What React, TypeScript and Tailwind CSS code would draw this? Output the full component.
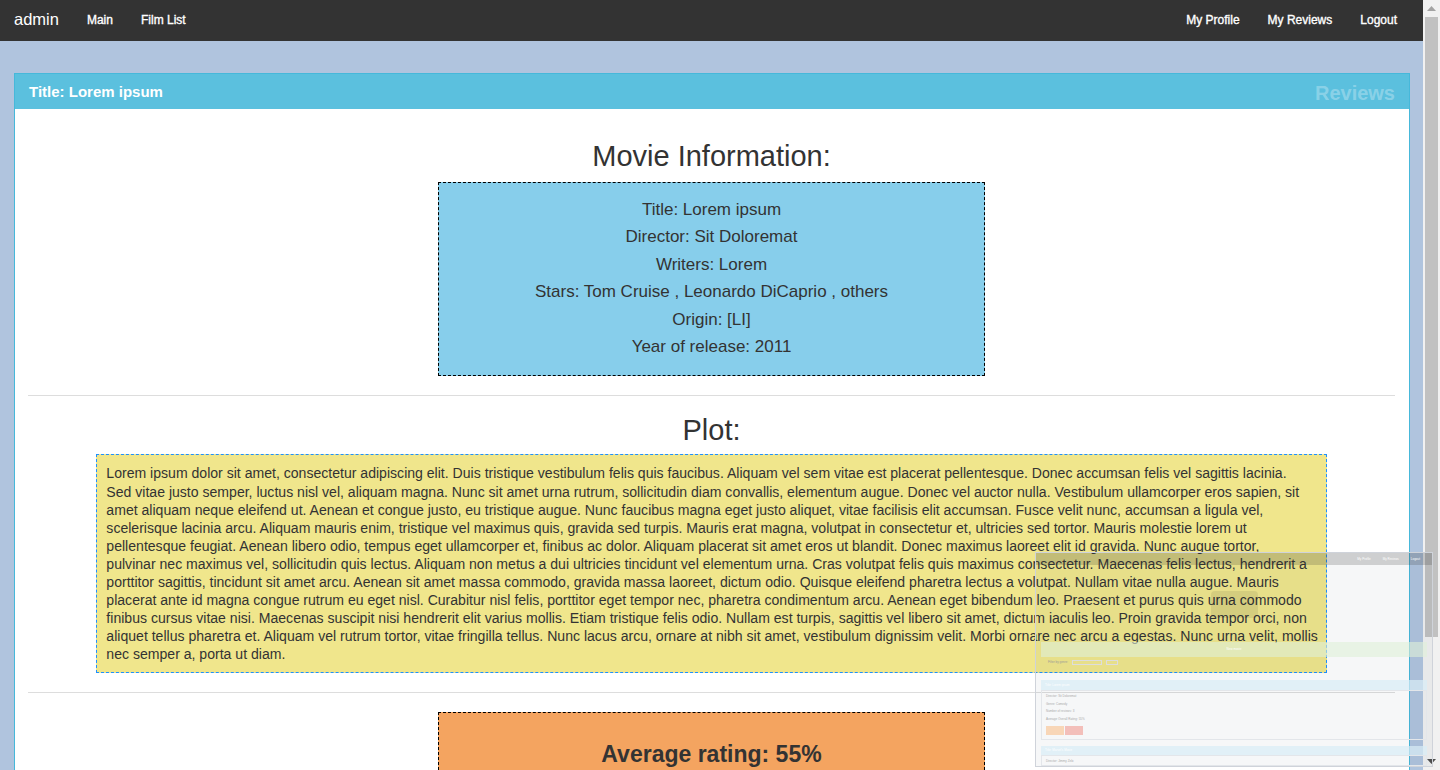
import React from 'react';

// lines as they wrap in the original page
const plotLines = [
  'Lorem ipsum dolor sit amet, consectetur adipiscing elit. Duis tristique vestibulum felis quis faucibus. Aliquam vel sem vitae est placerat pellentesque. Donec accumsan felis vel sagittis lacinia.',
  'Sed vitae justo semper, luctus nisl vel, aliquam magna. Nunc sit amet urna rutrum, sollicitudin diam convallis, elementum augue. Donec vel auctor nulla. Vestibulum ullamcorper eros sapien, sit',
  'amet aliquam neque eleifend ut. Aenean et congue justo, eu tristique augue. Nunc faucibus magna eget justo aliquet, vitae facilisis elit accumsan. Fusce velit nunc, accumsan a ligula vel,',
  'scelerisque lacinia arcu. Aliquam mauris enim, tristique vel maximus quis, gravida sed turpis. Mauris erat magna, volutpat in consectetur et, ultricies sed tortor. Mauris molestie lorem ut',
  'pellentesque feugiat. Aenean libero odio, tempus eget ullamcorper et, finibus ac dolor. Aliquam placerat sit amet eros ut blandit. Donec maximus laoreet elit id gravida. Nunc augue tortor,',
  'pulvinar nec maximus vel, sollicitudin quis lectus. Aliquam non metus a dui ultricies tincidunt vel elementum urna. Cras volutpat felis quis maximus consectetur. Maecenas felis lectus, hendrerit a',
  'porttitor sagittis, tincidunt sit amet arcu. Aenean sit amet massa commodo, gravida massa laoreet, dictum odio. Quisque eleifend pharetra lectus a volutpat. Nullam vitae nulla augue. Mauris',
  'placerat ante id magna congue rutrum eu eget nisl. Curabitur nisl felis, porttitor eget tempor nec, pharetra condimentum arcu. Aenean eget bibendum leo. Praesent et purus quis urna commodo',
  'finibus cursus vitae nisi. Maecenas suscipit nisi hendrerit elit varius mollis. Etiam tristique felis odio. Nullam est turpis, sagittis vel libero sit amet, dictum iaculis leo. Proin gravida tempor orci, non',
  'aliquet tellus pharetra et. Aliquam vel rutrum tortor, vitae fringilla tellus. Nunc lacus arcu, ornare at nibh sit amet, vestibulum dignissim velit. Morbi ornare nec arcu a egestas. Nunc urna velit, mollis',
  'nec semper a, porta ut diam.',
];

const movieInfo = [
  'Title: Lorem ipsum',
  'Director: Sit Doloremat',
  'Writers: Lorem',
  'Stars: Tom Cruise , Leonardo DiCaprio , others',
  'Origin: [LI]',
  'Year of release: 2011',
];

const Navbar: React.FC = () => (
  <nav className="h-[41px] shrink-0 bg-[#333] flex items-center justify-between pb-[2px] text-white [-webkit-text-stroke:0.35px_white]">
    <div className="flex items-center gap-7 pl-[14px]">
      <span className="text-[16.5px] [-webkit-text-stroke:0px]">admin</span>
      <span className="text-[12px]">Main</span>
      <span className="text-[12px]">Film List</span>
    </div>
    <div className="flex items-center gap-7 pr-[26px] text-[12px]">
      <span>My Profile</span>
      <span>My Reviews</span>
      <span>Logout</span>
    </div>
  </nav>
);

// faint screenshot preview that sits over the bottom right corner
const ShotPreview: React.FC = () => (
  <div className="absolute left-[1035px] top-[552px] w-[398px] h-[215px] border border-[#cfd3da] bg-[#1a2a50]/[0.04] flex flex-col overflow-hidden">
    <div className="h-[12px] bg-[#333]/20 flex items-center justify-end gap-3 pr-3 text-[3px] text-white">
      <span>My Profile</span>
      <span>My Reviews</span>
      <span>Logout</span>
    </div>
    <div className="h-[77px] flex justify-center pt-[26px]">
      <div className="w-[47px] h-[27px] bg-[#000]/[0.08] rounded-sm" />
    </div>
    <div className="mx-[5px] h-[15px] bg-[#dff0d8]/60 flex items-center justify-center text-[3px] text-white">New movie</div>
    <div className="h-[10px] flex items-center gap-1 pl-[12px] text-[3px] text-[#999]">
      <span>Filter by genre:</span>
      <div className="w-[30px] h-[5px] border border-[#ddd]" />
      <div className="w-[12px] h-[5px] border border-[#ddd]" />
    </div>
    <div className="h-[13px]" />
    <div className="mx-[5px] h-[10px] bg-[#d9edf7]/70 flex items-center px-[4px] text-[3px] text-white">Title: Lorem ipsum</div>
    <div className="mx-[5px] h-[50px] border border-[#e3e6ea] flex flex-col pl-[4px] pt-[3px] gap-[3px] text-[3px] text-[#aaa]">
      <span>Director: Sit Doloremat</span>
      <span>Genre: Comedy</span>
      <span>Number of reviews: 3</span>
      <span>Average Overall Rating: 55%</span>
      <div className="flex gap-[1px] mt-[2px]">
        <div className="w-[18px] h-[9px] bg-[#f9c89b]/70" />
        <div className="w-[18px] h-[9px] bg-[#f2a6a0]/70" />
      </div>
    </div>
    <div className="h-[6px]" />
    <div className="mx-[5px] h-[9px] bg-[#d9edf7]/70 flex items-center px-[4px] text-[3px] text-white">Title: Marvel's Movie</div>
    <div className="mx-[5px] flex-1 border border-[#e3e6ea] pl-[4px] pt-[3px] text-[3px] text-[#aaa]">Director: Jimmy Zelo</div>
  </div>
);

const Scrollbar: React.FC = () => (
  <div className="w-[17px] shrink-0 h-full bg-[#f1f1f1] flex flex-col">
    <div className="h-[17px] flex items-center justify-center">
      <svg width="9" height="5" viewBox="0 0 9 5"><polygon points="0,5 4.5,0 9,5" fill="#a3a3a3" /></svg>
    </div>
    <div className="flex-1 px-[2px]">
      <div className="h-[620px] bg-[#c1c1c1]" />
    </div>
    <div className="h-[17px] flex items-center justify-center">
      <svg width="9" height="5" viewBox="0 0 9 5"><polygon points="0,0 4.5,5 9,0" fill="#505050" /></svg>
    </div>
  </div>
);

export default function App() {
  return (
    <div className="relative flex h-[770px] w-full overflow-hidden bg-[#b0c4de] font-['Liberation_Sans',Arial,sans-serif] text-[#333]">
      <div className="flex-1 min-w-0 flex flex-col">
        <Navbar />
        <main className="pt-8 pl-[14px] pr-[13px]">
          <div className="border border-[#46b8da] bg-white">
            <div className="h-[35px] pt-[2px] bg-[#5bc0de] flex items-center justify-between px-[14px]">
              <span className="text-[15px] font-bold text-white">Title: Lorem ipsum</span>
              <span className="text-[20px] font-bold text-white/30">Reviews</span>
            </div>
            <div className="flex flex-col pt-[31px] pl-[13px] pr-[14px] pb-10">
              <h2 className="text-center text-[29px] leading-[32px] mb-[10px]">Movie Information:</h2>
              <div className="w-[40%] mx-auto bg-[#87ceeb] border border-dashed border-black pt-[13px] pb-[15px] text-center text-[17px] leading-[27.4px]">
                {movieInfo.map((line) => (
                  <p key={line}>{line}</p>
                ))}
              </div>
              <hr className="mt-[19px] border-0 border-t border-[#ddd]" />
              <h2 className="mt-[18px] text-center text-[29px] leading-[32px] mb-[8px]">Plot:</h2>
              <div className="w-[90%] mx-auto bg-[#f0e68c] border border-dashed border-[#1e90ff] pt-[9px] pb-[9px] px-[9px] text-[14.07px] leading-[18.1px]">
                {plotLines.map((line, i) => (
                  <div key={i} className="whitespace-nowrap">{line}</div>
                ))}
              </div>
              <hr className="mt-[19px] border-0 border-t border-[#ddd]" />
              <div className="mt-[19px] w-[40%] mx-auto bg-[#f4a460] border border-dashed border-black pt-[25px] pb-16 text-center">
                <h3 className="text-[23px] leading-8 font-bold">Average rating: 55%</h3>
              </div>
            </div>
          </div>
        </main>
      </div>
      <Scrollbar />
      <ShotPreview />
    </div>
  );
}
